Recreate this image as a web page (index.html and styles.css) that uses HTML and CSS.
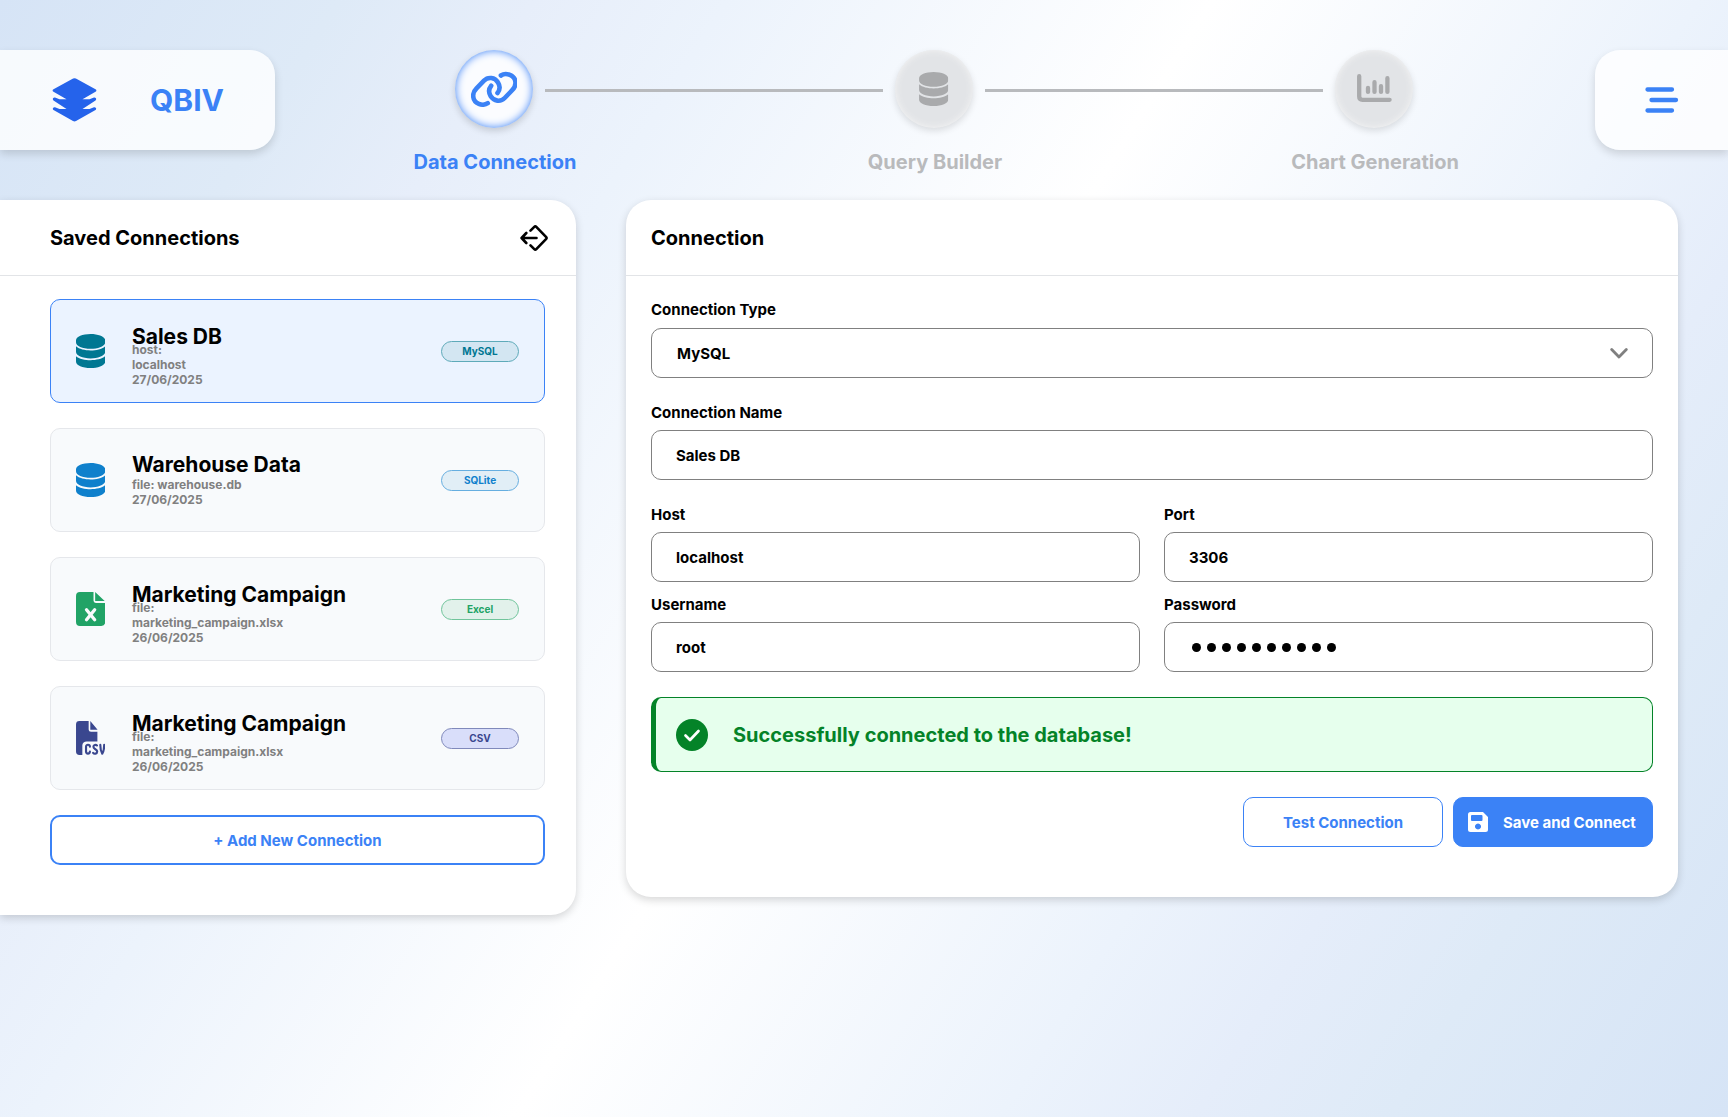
FILE: index.html
```html
<!DOCTYPE html>
<html lang="en">
<head>
<meta charset="utf-8">
<title>QBIV - Data Connection</title>
<link rel="stylesheet" href="styles.css">
</head>
<body>
<svg class="defs" width="0" height="0" aria-hidden="true">
  <symbol id="database" viewBox="0 0 30 35"><path d="M15 0C6.700 0 0 2.900 0 6.500v2.300c0 3.600 6.700 6.500 15 6.500s15-2.900 15-6.500V6.500C30 2.900 23.300 0 15 0zM0 12.600v6c0 3.600 6.700 6.500 15 6.500s15-2.900 15-6.500v-6c-3.200 3-9.100 4.300-15 4.300S3.200 15.600 0 12.600zM0 22.800v5.700C0 32.100 6.700 35 15 35s15-2.900 15-6.500v-5.700c-3.200 3-9.100 4.100-15 4.100S3.200 25.800 0 22.800z" fill="currentColor"/></symbol>
</svg>
<div class="page">
  <header class="topbar">
    <div class="brand">
      <svg class="brand-logo" viewBox="0 0 44 44"><path fill="#2563eb" d="M20.600.5a3 3 0 0 1 2.800 0L43 11.300c1.200.7 1.200 1.800 0 2.500L30 21.300h7l4.500-1.800c1.800-.5 3 1.700 1.500 2.900L30 31h7l4.500-1.800c1.800-.5 3 1.700 1.500 2.900L23.500 43a3 3 0 0 1-3 0L1 32.100c-1.500-1.200-.3-3.400 1.500-2.900L7 31h7L1 22.400c-1.500-1.200-.3-3.400 1.500-2.900L7 21.300h7L1 13.800c-1.200-.7-1.200-1.800 0-2.500z"/></svg>
      <span class="brand-name">QBIV</span>
    </div>
    <nav class="steps">
      <div class="step active">
        <div class="step-dot"><svg class="icon-link" viewBox="0 0 46.700 36.700" fill="none" stroke="#3b82f6" stroke-width="4.600" stroke-linecap="round"><path d="M16.800 32.200C12 35.500 2.500 33 2.200 25 2 21.500 4 19 5.500 17.500L13 9.700C17 5.500 24 6.300 27 11.500 29.500 15.500 28.500 19.500 26.500 22M29.900 4.500C34.700 1.200 44.200 3.700 44.500 11.700 44.700 15.200 42.700 17.700 41.200 19.200L33.700 27C29.700 31.200 22.700 30.400 19.700 25.200 17.200 21.200 18.200 17.200 20.200 14.700"/></svg></div>
        <span class="step-label">Data Connection</span>
      </div>
      <span class="rail"></span>
      <div class="step">
        <div class="step-dot"><svg class="icon-db"><use href="#database"/></svg></div>
        <span class="step-label">Query Builder</span>
      </div>
      <span class="rail"></span>
      <div class="step">
        <div class="step-dot"><svg class="icon-chart" viewBox="0 0 35 28" fill="none" stroke="#a9aaac" stroke-width="4.300" stroke-linecap="round" stroke-linejoin="round"><path d="M2.200 2.200v20.300q0 3.300 3.300 3.300h27.100M11 13.900v4M17.500 8.200v9.700M24 12.200v5.700M30.400 4.200v13.700"/></svg></div>
        <span class="step-label">Chart Generation</span>
      </div>
    </nav>
    <button class="menu" aria-label="Menu"><svg viewBox="0 0 34 26" stroke="#3b82f6" stroke-width="4.300" stroke-linecap="round"><path d="M2.500 2.500h24.500M6.500 13h24.500M2.500 23.500h24.500"/></svg></button>
  </header>
  <main class="content">
    <aside class="card saved">
      <div class="card-head">
        <h2>Saved Connections</h2>
        <svg class="collapse" viewBox="0 0 28 26" fill="none" stroke="#000" stroke-width="2.600" stroke-linecap="round" stroke-linejoin="round"><path d="M16.500 13H1.800M6.300 8L1.600 13l4.700 5M10.500 5.700L14.300 1.900q1-1 2 0l9.700 9.900q1.100 1.200 0 2.400l-9.700 9.900q-1 1-2 0L10.500 20.300"/></svg>
      </div>
      <div class="saved-list">
        <article class="item selected mysql">
          <svg class="item-icon"><use href="#database"/></svg>
          <div class="item-text"><h3>Sales DB</h3><p>host:<br>localhost<br>27/06/2025</p></div>
          <span class="tag">MySQL</span>
        </article>
        <article class="item sqlite">
          <svg class="item-icon"><use href="#database"/></svg>
          <div class="item-text"><h3>Warehouse Data</h3><p>file: warehouse.db<br>27/06/2025</p></div>
          <span class="tag">SQLite</span>
        </article>
        <article class="item excel">
          <svg class="item-icon" viewBox="0 0 30 35"><path fill="currentColor" d="M4 0h14v8.500c0 1.700 1 2.700 2.700 2.700H30V31a4 4 0 0 1-4 4H4a4 4 0 0 1-4-4V4a4 4 0 0 1 4-4zM19.700 0L29.500 9.200h-9.800z"/><path d="M10.800 18.200l8.400 10.400M19.200 18.200l-8.400 10.400" stroke="#f8fafc" stroke-width="3.400" stroke-linecap="round"/></svg>
          <div class="item-text"><h3>Marketing Campaign</h3><p>file:<br>marketing_campaign.xlsx<br>26/06/2025</p></div>
          <span class="tag">Excel</span>
        </article>
        <article class="item csv">
          <svg class="item-icon" viewBox="0 0 30 35"><path fill="currentColor" d="M3.500 0H13v8.500c0 1.700 1 2.600 2.500 2.600H22V21H11c-2.500 0-4.500 1.700-4.500 4v10h-3A3.500 3.500 0 0 1 0 31.500v-28A3.500 3.500 0 0 1 3.500 0zM14.700 0l7.500 9h-7.500z"/><path fill="none" stroke="currentColor" stroke-width="2.200" stroke-linecap="round" stroke-linejoin="round" d="M14.300 26.500c0-2.800-4-2.800-4 0v5c0 2.800 4 2.800 4 0M21.500 25.200c-1-1.100-3.600-.8-3.600 1.300 0 2.800 3.900 2.400 3.900 5 0 2.400-3.200 2.700-4.200 1.300M25 24.600c0 3.600.6 6.700 2 9 1.400-2.300 2-5.400 2-9"/></svg>
          <div class="item-text"><h3>Marketing Campaign</h3><p>file:<br>marketing_campaign.xlsx<br>26/06/2025</p></div>
          <span class="tag">CSV</span>
        </article>
        <button class="add">+ Add New Connection</button>
      </div>
    </aside>
    <section class="card form-card">
      <div class="card-head"><h2>Connection</h2></div>
      <div class="form">
        <div class="field type"><label>Connection Type</label><div class="input">MySQL<svg class="chevron" viewBox="0 0 18 11" fill="none" stroke="#808080" stroke-width="2.800" stroke-linecap="round" stroke-linejoin="round"><path d="M1.700 1.500L9 9l7.300-7.500"/></svg></div></div>
        <div class="field name"><label>Connection Name</label><div class="input">Sales DB</div></div>
        <div class="pair">
          <div class="field"><label>Host</label><div class="input">localhost</div></div>
          <div class="field"><label>Port</label><div class="input">3306</div></div>
          <div class="field"><label>Username</label><div class="input">root</div></div>
          <div class="field"><label>Password</label><div class="input"><span class="dots"><i></i><i></i><i></i><i></i><i></i><i></i><i></i><i></i><i></i><i></i></span></div></div>
        </div>
        <div class="alert">
          <svg viewBox="0 0 32 32"><circle cx="16" cy="16" r="16" fill="#048328"/><path d="M9.500 16.500l4.500 4.500 8.500-9" fill="none" stroke="#fff" stroke-width="2.700" stroke-linecap="round" stroke-linejoin="round"/></svg>
          <span>Successfully connected to the database!</span>
        </div>
        <div class="actions">
          <button class="btn outline">Test Connection</button>
          <button class="btn solid"><svg viewBox="0 0 20 20"><path fill="#fff" fill-rule="evenodd" d="M2.500 0H15l5 5v12.500a2.500 2.500 0 0 1-2.500 2.500h-15A2.500 2.500 0 0 1 0 17.500v-15A2.500 2.500 0 0 1 2.500 0zM4 3a1 1 0 0 0-1 1v4a1 1 0 0 0 1 1h9.500a1 1 0 0 0 1-1V4a1 1 0 0 0-1-1zM10 11.500a3 3 0 1 0 .01 0z"/></svg>Save and Connect</button>
        </div>
      </div>
    </section>
  </main>
</div>
</body>
</html>
```
FILE: styles.css
```css
* { box-sizing: border-box; }
body {
  margin: 0;
  font-family: Inter, "Liberation Sans", sans-serif;
  font-weight: 700;
  color: #000;
}
h2, h3, p { margin: 0; font-weight: 700; }
button { font: inherit; cursor: pointer; padding: 0; }
svg { display: block; flex: none; }
.defs { position: absolute; }

.page {
  height: 1117px;
  overflow: hidden;
  padding-top: 50px;
  background: linear-gradient(122deg, #d6e4f6 0%, #deeaf7 14%, #e7eefa 22%, #ecf3fc 30%, #fff 50%, #ecf3fc 70%, #e5edfa 78%, #deeaf7 86%, #d6e4f6 100%);
}

.topbar { display: flex; height: 150px; }
.brand, .menu {
  height: 100px;
  background: rgba(255, 255, 255, .8);
  box-shadow: 0 4px 8px rgba(0, 0, 0, .14);
  display: flex;
  align-items: center;
}
.brand { width: 275px; border-radius: 0 25px 25px 0; padding-left: 52px; gap: 53px; }
.brand-logo { width: 45px; height: 44px; }
.brand-name { color: #3b82f6; font-size: 30px; line-height: 1; }
.menu { width: 133px; border: 0; border-radius: 25px 0 0 25px; padding-left: 50px; }
.menu svg { width: 34px; height: 26px; }

.steps { width: 1320px; display: flex; padding-left: 119px; }
.step {
  width: 200px;
  margin: 0 -49px;
  display: flex;
  flex-direction: column;
  align-items: center;
  color: #b9babc;
}
.step:first-child { margin-left: 0; }
.step-dot {
  width: 78px;
  height: 78px;
  border-radius: 50%;
  display: flex;
  align-items: center;
  justify-content: center;
  background: #e2e4e7;
  box-shadow: 0 3px 7px rgba(0, 0, 0, .12), inset 0 0 7px #f5f5f5;
  color: #a9aaac;
}
.step.active { color: #3b82f6; }
.step.active .step-dot {
  background: #fbfcff;
  box-shadow: 0 3px 7px rgba(0, 0, 0, .16), inset 0 0 8px #3b82f6;
}
.step-label { margin: 22px 0 0 2px; font-size: 20px; line-height: 24px; white-space: nowrap; }
.icon-link { width: 46.7px; height: 36.7px; }
.icon-db { width: 29.3px; height: 34px; }
.icon-chart { width: 35px; height: 28px; margin-bottom: 2px; }
.rail { width: 338px; height: 3px; margin: 38.500px 0 0; background: #b8babd; flex: none; }

.content { display: flex; align-items: flex-start; gap: 50px; }
.card { background: #fff; box-shadow: 0 3px 8px rgba(0, 0, 0, .16); }
.card-head {
  height: 76px;
  border-bottom: 1px solid #e2e4e7;
  display: flex;
  align-items: center;
  justify-content: space-between;
}
.card-head h2 { font-size: 20px; line-height: 24px; }
.saved { width: 576px; height: 715px; border-radius: 0 25px 25px 0; }
.saved .card-head { padding: 0 28px 0 50px; }
.collapse { width: 28px; height: 26px; }
.saved-list { padding: 23px 31px 0 50px; display: flex; flex-direction: column; gap: 25px; }

.item {
  height: 104px;
  border: 1px solid #e5e7eb;
  border-radius: 10px;
  background: #f8fafc;
  display: flex;
  align-items: center;
  padding: 0 25px;
}
.item.selected { background: #ebf3ff; border-color: #3b82f6; }
.item-icon { width: 29.2px; height: 34px; }
.item-text { margin-left: 26.8px; padding-top: 1.6px; flex: 1; }
.item h3 { font-size: 21px; line-height: 20px; margin-bottom: -5px; padding-top: 11px; }
.item p { font-size: 12px; line-height: 15px; color: #808080; }
.sqlite h3 { margin-bottom: 2px; padding-top: 2px; }
.tag {
  width: 78px;
  height: 21px;
  border: 1px solid currentColor;
  border-radius: 11px;
  display: flex;
  align-items: center;
  justify-content: center;
  font-size: 10px;
}
.mysql .item-icon, .mysql .tag { color: #007792; }
.sqlite .item-icon, .sqlite .tag { color: #0f80cc; }
.excel .item-icon, .excel .tag { color: #21a366; }
.csv .item-icon, .csv .tag { color: #3a478f; }
.mysql .tag { background: #d3e6f2; border-color: #5eaab9; }
.sqlite .tag { background: #e1eef6; border-color: #66aee0; }
.excel .tag { background: #e2f1eb; border-color: #70c49b; }
.csv .tag { background: #d9defa; border-color: #8089bb; }
.item.sqlite h3 { margin-bottom: 2px; padding-top: 2px; }
.item.sqlite .item-text { padding-top: 0; }
.add {
  height: 50px;
  border: 2px solid #3b82f6;
  border-radius: 10px;
  background: #fff;
  color: #3b82f6;
  font-size: 15px;
}

.form-card { width: 1052px; height: 697px; border-radius: 25px; }
.form-card .card-head { padding: 0 25px; }
.form { padding: 23px 25px 0; }
.field label { display: block; height: 20px; font-size: 15px; line-height: 21px; }
.input {
  height: 50px;
  margin-top: 8px;
  border: 1px solid #808080;
  border-radius: 10px;
  padding: 0 24px;
  display: flex;
  align-items: center;
  justify-content: space-between;
  font-size: 15px;
}
.type { margin-bottom: 24px; }
.type .input { margin-top: 9px; padding-left: 25px; }
.name { margin-bottom: 24px; }
.chevron { width: 18px; height: 11px; }
.pair { display: grid; grid-template-columns: 1fr 1fr; gap: 12px 24px; }
.dots { display: flex; gap: 6px; padding-left: 3px; }
.dots i { width: 9px; height: 9px; border-radius: 50%; background: #000; }
.alert {
  height: 75px;
  margin-top: 25px;
  border: 1px solid #048328;
  border-left-width: 5px;
  border-radius: 10px;
  background: #e6ffed;
  display: flex;
  align-items: center;
  padding-left: 20px;
  gap: 25px;
  color: #048328;
  font-size: 20px;
}
.alert svg { width: 32px; height: 32px; }
.actions { margin-top: 25px; display: flex; justify-content: flex-end; gap: 10px; }
.btn { width: 200px; height: 50px; border: 1px solid #3b82f6; border-radius: 10px; font-size: 15px; line-height: 17px; }
.outline { background: #fff; color: #3b82f6; }
.solid { display: flex; align-items: center; gap: 15px; padding-left: 14px; background: #3b82f6; color: #fff; }
.solid svg { width: 20px; height: 20px; }
```
